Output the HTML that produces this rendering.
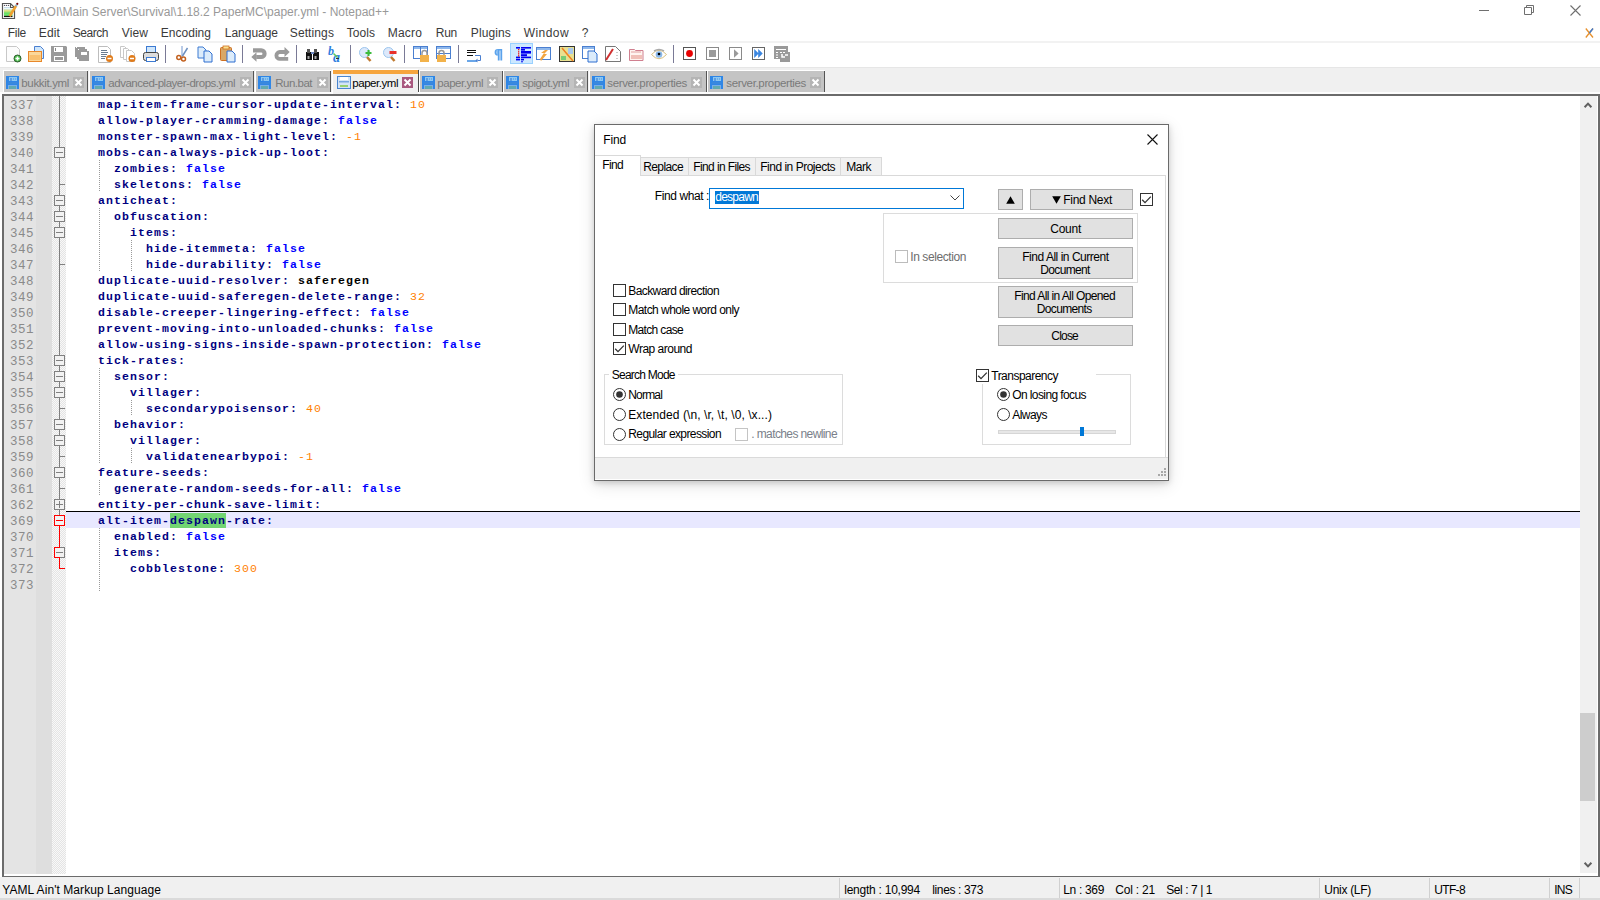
<!DOCTYPE html><html><head><meta charset="utf-8"><style>
*{margin:0;padding:0;box-sizing:border-box}
html,body{width:1600px;height:900px;overflow:hidden;background:#fff;font-family:"Liberation Sans",sans-serif;font-size:12px;color:#000}
.a{position:absolute}
.s{position:absolute;white-space:pre}
svg{position:absolute;overflow:visible}
.code{font-family:"Liberation Mono",monospace;font-size:13.33px;line-height:16px;white-space:pre}
.t{font-size:11.5px;letter-spacing:1.1px}
.ln{position:absolute;width:32px;text-align:right;color:#8a8a8a;font-size:12.5px;letter-spacing:0.5px}
.t{position:absolute;font-weight:bold;color:#000080}
.f{color:#0000ff}
.o{color:#ff8000;font-weight:normal}
.b{color:#000}
.hl{}
.g{position:absolute;width:1px;background-image:linear-gradient(#9a9a9a 50%,transparent 50%);background-size:1px 2px}
.fb{position:absolute;width:11px;height:11px;border:1px solid #808080;background:#f2f2f2}
.fl{position:absolute;background:#808080}
.btn{position:absolute;background:#e1e1e1;border:1px solid #adadad}
.cb{position:absolute;width:13px;height:13px;border:1px solid #333;background:#fff}
.rd{position:absolute;width:13px;height:13px;border:1px solid #333;border-radius:50%;background:#fff}
.tab{position:absolute;top:72px;height:20px;background:#c4c4c4}
</style></head><body>
<svg style="left:0px;top:0px" width="20" height="21" viewBox="0 0 20 21"><defs><linearGradient id="ag" x1="0" y1="0" x2="0" y2="1"><stop offset="0" stop-color="#cfe8f4"/><stop offset="0.3" stop-color="#e2e07a"/><stop offset="0.62" stop-color="#66dd66"/><stop offset="1" stop-color="#78ee78"/></linearGradient></defs><path d="M2.5 3.5H10.5L14.5 7.5V18.5H2.5Z" fill="#fff" stroke="#555" stroke-width="1.2"/><path d="M10.5 3.5V7.5H14.5" fill="none" stroke="#555" stroke-width="1.1"/><circle cx="4.5" cy="5.4" r=".7" fill="#556"/><circle cx="6.5" cy="5.4" r=".7" fill="#556"/><circle cx="8.5" cy="5.4" r=".7" fill="#556"/><rect x="4" y="7" width="6" height=".8" fill="#b8d8e8"/><rect x="4" y="8.6" width="8.5" height="7.4" fill="url(#ag)"/><rect x="4" y="15.8" width="8.5" height="1.3" fill="#111"/><path d="M9.6 16.2L16.2 5.6" stroke="#f0a030" stroke-width="2.6"/><path d="M15.8 6.2L16.8 4.6" stroke="#8ab0d0" stroke-width="2"/><circle cx="17.3" cy="3.8" r="1.1" fill="#700"/></svg>
<div class="s" style="left:23.28px;top:5.00px;font-size:12px;line-height:15px;color:#999;font-weight:normal;letter-spacing:-0.007px;">D:\AOI\Main Server\Survival\1.18.2 PaperMC\paper.yml - Notepad++</div>
<div class="a" style="left:1479px;top:10px;width:10px;height:1px;background:#6f6f6f"></div>
<svg style="left:1524px;top:5px" width="10" height="10"><path d="M0.5 2.5h7v7h-7z M2.5 2.5v-2h7v7h-2" fill="none" stroke="#6f6f6f"/></svg>
<svg style="left:1570px;top:5px" width="11" height="11"><path d="M0.5 0.5L10.5 10.5M10.5 0.5L0.5 10.5" stroke="#6f6f6f" stroke-width="1.1"/></svg>
<div class="s" style="left:7.78px;top:26.00px;font-size:12px;line-height:15px;color:#3a3a3a;font-weight:normal;letter-spacing:-0.281px;">File</div>
<div class="s" style="left:38.78px;top:26.00px;font-size:12px;line-height:15px;color:#3a3a3a;font-weight:normal;letter-spacing:0.133px;">Edit</div>
<div class="s" style="left:72.78px;top:26.00px;font-size:12px;line-height:15px;color:#3a3a3a;font-weight:normal;letter-spacing:-0.469px;">Search</div>
<div class="s" style="left:121.78px;top:26.00px;font-size:12px;line-height:15px;color:#3a3a3a;font-weight:normal;letter-spacing:0.106px;">View</div>
<div class="s" style="left:160.78px;top:26.00px;font-size:12px;line-height:15px;color:#3a3a3a;font-weight:normal;letter-spacing:0.022px;">Encoding</div>
<div class="s" style="left:224.78px;top:26.00px;font-size:12px;line-height:15px;color:#3a3a3a;font-weight:normal;letter-spacing:-0.021px;">Language</div>
<div class="s" style="left:289.78px;top:26.00px;font-size:12px;line-height:15px;color:#3a3a3a;font-weight:normal;letter-spacing:0.108px;">Settings</div>
<div class="s" style="left:346.78px;top:26.00px;font-size:12px;line-height:15px;color:#3a3a3a;font-weight:normal;letter-spacing:0.041px;">Tools</div>
<div class="s" style="left:387.78px;top:26.00px;font-size:12px;line-height:15px;color:#3a3a3a;font-weight:normal;letter-spacing:0.175px;">Macro</div>
<div class="s" style="left:435.78px;top:26.00px;font-size:12px;line-height:15px;color:#3a3a3a;font-weight:normal;letter-spacing:-0.265px;">Run</div>
<div class="s" style="left:470.78px;top:26.00px;font-size:12px;line-height:15px;color:#3a3a3a;font-weight:normal;letter-spacing:0.123px;">Plugins</div>
<div class="s" style="left:523.78px;top:26.00px;font-size:12px;line-height:15px;color:#3a3a3a;font-weight:normal;letter-spacing:0.422px;">Window</div>
<div class="s" style="left:581.78px;top:26.00px;font-size:12px;line-height:15px;color:#3a3a3a;font-weight:normal;letter-spacing:0.000px;">?</div>
<svg style="left:1585px;top:28px" width="9" height="10"><path d="M0.8 0.5L8 9.5M8 0.5L0.8 9.5" stroke="#e8902a" stroke-width="1.3"/><path d="M8 0.5L4.4 5" stroke="#3a7bd5" stroke-width="1.3"/></svg>
<div class="a" style="left:0;top:41px;width:1600px;height:2px;background:#f2f2f2"></div>
<svg style="left:6px;top:46px" width="16" height="16" viewBox="0 0 16 16"><path d="M0.5 0.5h10l3 3v12h-13z" fill="#fcfcfc" stroke="#c8c8c8"/><circle cx="11.5" cy="12.5" r="3.5" fill="#4bbf4b" stroke="#2d5a2d"/><path d="M11.5 10.5v4M9.5 12.5h4" stroke="#fff" stroke-width="1.5"/></svg>
<svg style="left:28px;top:46px" width="16" height="16" viewBox="0 0 16 16"><path d="M6.5 0.5h6l3 3v9h-9z" fill="#cfe6fb" stroke="#4a7fd0"/><rect x="0.5" y="5.5" width="13" height="10" fill="#fbd79a" stroke="#e8882a"/><rect x="1.5" y="9" width="11" height="5" fill="#f8c070"/></svg>
<svg style="left:51px;top:46px" width="16" height="16" viewBox="0 0 16 16"><path d="M0 0h15l1 1v15h-16z" fill="#9a9a9a"/><rect x="3" y="1" width="9" height="5" fill="#fff"/><rect x="4" y="2" width="1" height="3" fill="#888"/><rect x="3" y="10" width="10" height="5" fill="#fff"/><rect x="4" y="11" width="8" height="3" fill="#9a9a9a"/></svg>
<svg style="left:75px;top:46px" width="16" height="16" viewBox="0 0 16 16"><rect x="0" y="1" width="10" height="10" fill="#9a9a9a"/><rect x="2" y="3" width="10" height="10" fill="#9a9a9a"/><rect x="4" y="5" width="10" height="10" fill="#9a9a9a"/><rect x="6" y="6" width="6" height="3" fill="#fff"/><rect x="1" y="1" width="1" height="1" fill="#fff"/><rect x="3" y="3" width="1" height="1" fill="#fff"/></svg>
<svg style="left:98px;top:46px" width="16" height="16" viewBox="0 0 16 16"><path d="M0.5 0.5h9l3 3v13h-12z" fill="#fff" stroke="#bdbdbd"/><path d="M3 4.5h6M3 6.5h7M3 8.5h6M3 10.5h5M3 12.5h4" stroke="#6a7c90" stroke-width="1"/><circle cx="11.5" cy="12.5" r="3.5" fill="#e07b1a"/><path d="M9.5 12.5h4" stroke="#fff" stroke-width="1.5"/></svg>
<svg style="left:120px;top:46px" width="16" height="16" viewBox="0 0 16 16"><path d="M0.5 0.5h4l3 3v8h-7z" fill="#fff" stroke="#c8c8c8"/><path d="M3.5 2.5h4l3 3v8h-7z" fill="#fff" stroke="#c8c8c8"/><path d="M6.5 4.5h5l3 3v8h-8z" fill="#fff" stroke="#c8c8c8"/><circle cx="12" cy="12.5" r="3.5" fill="#e07b1a"/><path d="M10 12.5h4" stroke="#fff" stroke-width="1.5"/></svg>
<svg style="left:143px;top:46px" width="16" height="16" viewBox="0 0 16 16"><rect x="3.5" y="0.5" width="9" height="7" fill="#cfe6fb" stroke="#3c7ad2"/><rect x="0.5" y="6.5" width="15" height="8" rx="2" fill="#dcdcdc" stroke="#444"/><rect x="3.5" y="11.5" width="9" height="4" fill="#fff" stroke="#3c7ad2"/></svg>
<div class="a" style="left:165px;top:45px;width:1px;height:18px;background:#7a7a96"></div>
<svg style="left:176px;top:46px" width="16" height="16" viewBox="0 0 16 16"><path d="M6 0v11" stroke="#8aa8d8" stroke-width="1.2"/><path d="M11.5 2L6.5 10" stroke="#6b8fc0" stroke-width="1.5"/><circle cx="2.8" cy="11.5" r="2" fill="none" stroke="#c2601e" stroke-width="1.5"/><circle cx="7.5" cy="13" r="2" fill="none" stroke="#c2601e" stroke-width="1.5"/></svg>
<svg style="left:197px;top:46px" width="16" height="16" viewBox="0 0 16 16"><path d="M1.0 1.0h5l3 3v8h-8z" fill="#dcecfb" stroke="#3c7ad2"/><path d="M7.0 5.0h5l3 3v8h-8z" fill="#dcecfb" stroke="#2f6fd0"/></svg>
<svg style="left:220px;top:46px" width="16" height="16" viewBox="0 0 16 16"><rect x="0.5" y="1.5" width="11" height="13" rx="1" fill="#d9a866" stroke="#d07020"/><rect x="3" y="0" width="6" height="3" fill="#f8e090" stroke="#d07020" stroke-width=".8"/><path d="M7.0 5.0h5l3 3v8h-8z" fill="#dcecfb" stroke="#2f6fd0"/></svg>
<div class="a" style="left:242px;top:45px;width:1px;height:18px;background:#7a7a96"></div>
<svg style="left:251px;top:46px" width="16" height="18" viewBox="0 0 16 18"><path d="M2 4.3h8.2a3.35 3.35 0 0 1 0 6.7h-5" fill="none" stroke="#9a9a9a" stroke-width="4.2"/><path d="M0.3 11l5.2-4.8v9.6z" fill="#9a9a9a"/></svg>
<svg style="left:274px;top:46px" width="16" height="18" viewBox="0 0 16 18"><path d="M12 6h-6.2a3.4 3.4 0 0 0 0 6.8h8.4" fill="none" stroke="#9a9a9a" stroke-width="3.8"/><path d="M15.7 6l-5.2-5v10z" fill="#9a9a9a"/></svg>
<div class="a" style="left:296px;top:45px;width:1px;height:18px;background:#7a7a96"></div>
<svg style="left:306px;top:48px" width="14" height="13" viewBox="0 0 14 13"><rect x="0" y="4" width="6" height="8" fill="#111"/><rect x="7" y="4" width="6" height="8" fill="#111"/><rect x="1" y="1" width="3" height="4" fill="#555"/><rect x="8" y="1" width="3" height="4" fill="#555"/><rect x="5" y="4" width="3" height="2" fill="#6a86c0"/><rect x="1.5" y="8" width="2" height="3" fill="#aaa"/><rect x="8.5" y="8" width="2" height="3" fill="#aaa"/></svg>
<svg style="left:328px;top:46px" width="16" height="16" viewBox="0 0 16 16"><text x="0" y="9" font-family="Liberation Serif" font-style="italic" font-weight="bold" font-size="12" fill="#2f7fe0">b</text><text x="5" y="16" font-family="Liberation Serif" font-style="italic" font-weight="bold" font-size="14" fill="#2f7fe0">a</text><path d="M5.5 7.5l4 4" stroke="#5fc85f" stroke-width="1.6"/><path d="M8 12.5h3" stroke="#333" stroke-width="1"/></svg>
<div class="a" style="left:350px;top:45px;width:1px;height:18px;background:#7a7a96"></div>
<svg style="left:359px;top:47px" width="14" height="15" viewBox="0 0 14 15"><circle cx="5.5" cy="5.5" r="5" fill="#dde9fb" stroke="#9cc6ee"/><path d="M8 10l3.5 4" stroke="#c07a30" stroke-width="2.5"/><path d="M9.5 3v6M6.5 6h6" stroke="#3dbb3d" stroke-width="2"/></svg>
<svg style="left:383px;top:47px" width="14" height="15" viewBox="0 0 14 15"><circle cx="5.5" cy="5.5" r="5" fill="#dde9fb" stroke="#9cc6ee"/><path d="M8 10l3.5 4" stroke="#c07a30" stroke-width="2.5"/><rect x="6.5" y="4" width="7" height="3" fill="#e8302a"/></svg>
<div class="a" style="left:404px;top:45px;width:1px;height:18px;background:#7a7a96"></div>
<svg style="left:413px;top:46px" width="16" height="16" viewBox="0 0 16 16"><rect x="0.5" y="0.5" width="14" height="12" fill="#fff" stroke="#4a7fd0"/><path d="M1 2h13" stroke="#8fb8ec" stroke-width="2"/><path d="M7.5 1v12" stroke="#4a7fd0"/><path d="M9 10v-3a2.5 2.5 0 0 1 5 0v3" fill="none" stroke="#999" stroke-width="1.5"/><rect x="7" y="9" width="9" height="7" fill="#f2b24a"/></svg>
<svg style="left:436px;top:46px" width="16" height="16" viewBox="0 0 16 16"><rect x="0.5" y="0.5" width="14" height="12" fill="#fff" stroke="#4a7fd0"/><path d="M1 2h13" stroke="#8fb8ec" stroke-width="2"/><path d="M1 7.5h13" stroke="#4a7fd0"/><path d="M3 10v-3a2.5 2.5 0 0 1 5 0v3" fill="none" stroke="#999" stroke-width="1.5"/><rect x="1" y="9" width="9" height="7" fill="#f2b24a"/></svg>
<div class="a" style="left:458px;top:45px;width:1px;height:18px;background:#7a7a96"></div>
<svg style="left:467px;top:47px" width="16" height="16" viewBox="0 0 16 16"><path d="M0 3.5h9M0 5.5h9M0 8.5h6" stroke="#111"/><rect x="0" y="13" width="10" height="2" fill="#6aa6e8"/><path d="M8 8.5h5.5v5h-3" fill="none" stroke="#4a7fd0"/><path d="M10.5 11.5v4l-2-2z" fill="#4a7fd0"/></svg>
<svg style="left:493px;top:48px" width="10" height="13" viewBox="0 0 10 13"><path d="M5 1H9.2V12.5H7.4V2.6H6.6V12.5H4.8V7.6A3.3 3.3 0 0 1 5 1z" fill="#5aa2ec"/><path d="M4.6 1.6A2.6 3 0 0 0 4.6 7" fill="#9ccaf5"/></svg>
<div class="a" style="left:510px;top:43px;width:23px;height:21px;background:#cce8ff;border:1px solid #99d1ff"></div>
<svg style="left:515px;top:46px" width="16" height="16" viewBox="0 0 16 16"><g fill="#0000f0"><rect x="1" y="1" width="4" height="1.6"/><rect x="1" y="10.6" width="4" height="1.6"/><rect x="1" y="12.8" width="4" height="1.6"/><rect x="6" y="1" width="10" height="1.6"/><rect x="6" y="3" width="4" height="1.6"/><rect x="6" y="5" width="10" height="2.6"/><rect x="6" y="8.2" width="6" height="2"/><rect x="6" y="10.6" width="10" height="1.6"/><rect x="6" y="12.8" width="3" height="1.6"/><rect x="6.3" y="15" width="1.4" height="1.4"/></g><g fill="#ee1111"><rect x="3" y="3" width="1.3" height="1.3"/><rect x="3" y="5.2" width="1.3" height="1.3"/><rect x="3" y="7.2" width="1.3" height="1.3"/><rect x="3" y="9.2" width="1.3" height="1.3"/></g></svg>
<svg style="left:536px;top:47px" width="15" height="15" viewBox="0 0 15 15"><rect x="0.5" y="0.5" width="14" height="12" fill="#fff" stroke="#4a7fd0"/><path d="M1 2h13" stroke="#8fb8ec" stroke-width="2"/><path d="M4 12l4-6h-3l4-3h3l-4 4h3l-6 7z" fill="#f3a540"/></svg>
<svg style="left:559px;top:46px" width="16" height="16" viewBox="0 0 16 16"><rect x="0.5" y="0.5" width="15" height="15" fill="#e8e090" stroke="#333"/><rect x="9" y="2" width="5" height="6" fill="#a8c8ec"/><rect x="2" y="10" width="5" height="4" fill="#77cc77"/><path d="M3 2l5 6l6 7" stroke="#f08020" stroke-width="1.5" fill="none"/></svg>
<svg style="left:582px;top:46px" width="16" height="16" viewBox="0 0 16 16"><rect x="0.5" y="0.5" width="12" height="12" fill="#fff" stroke="#4a7fd0"/><path d="M1 2h11" stroke="#8fb8ec" stroke-width="2"/><path d="M6.0 5.0h6l3 3v8h-9z" fill="#dcecfb" stroke="#2f6fd0"/></svg>
<svg style="left:605px;top:46px" width="16" height="16" viewBox="0 0 16 16"><path d="M0.5 0.5h10l5 5v10h-15z" fill="#fff" stroke="#777"/><path d="M1 14l7-11" stroke="#d03030" stroke-width="2"/><path d="M12 6v8" stroke="#999" stroke-dasharray="1 2"/></svg>
<svg style="left:629px;top:49px" width="15" height="12" viewBox="0 0 15 12"><path d="M0.5 0.5h5l1 1h7.5v10h-13.5z" fill="#fff4f0" stroke="#d08090"/><rect x="2" y="6" width="11" height="4" fill="#f0c0b8"/><path d="M2 3h10" stroke="#e0a0a0"/></svg>
<svg style="left:651px;top:48px" width="16" height="13" viewBox="0 0 16 13"><path d="M0.5 6.5Q8 -2 15.5 6.5Q8 15 0.5 6.5z" fill="#fff" stroke="#d8c080"/><path d="M3 3Q8 0 13 3" stroke="#aaa" stroke-width="1.5" fill="none"/><circle cx="8" cy="6.5" r="3.3" fill="#8ab8e8"/><circle cx="8" cy="6" r="1.3" fill="#000"/></svg>
<div class="a" style="left:673px;top:45px;width:1px;height:18px;background:#7a7a96"></div>
<svg style="left:683px;top:47px" width="13" height="13" viewBox="0 0 13 13"><rect x="0.5" y="0.5" width="12" height="12" fill="#fff" stroke="#555"/><circle cx="6.5" cy="6.5" r="3.4" fill="#e80000"/></svg>
<svg style="left:706px;top:47px" width="13" height="13" viewBox="0 0 13 13"><rect x="0.5" y="0.5" width="12" height="12" fill="#fff" stroke="#8a8a8a"/><rect x="3" y="3" width="7" height="7" fill="#9a9a9a"/></svg>
<svg style="left:729px;top:47px" width="13" height="13" viewBox="0 0 13 13"><rect x="0.5" y="0.5" width="12" height="12" fill="#fff" stroke="#8a8a8a"/><path d="M5 2.2l4.6 4.3l-4.6 4.3z" fill="#9a9a9a"/></svg>
<svg style="left:752px;top:47px" width="13" height="13" viewBox="0 0 13 13"><rect x="0.5" y="0.5" width="12" height="12" fill="#fff" stroke="#666"/><path d="M2.2 2l4.5 4.5l-4.5 4.5zM6.2 2l4.5 4.5l-4.5 4.5z" fill="#3a86e0"/></svg>
<svg style="left:774px;top:46px" width="16" height="16" viewBox="0 0 16 16"><rect x="0" y="0" width="14" height="13" fill="#9a9a9a"/><rect x="6" y="6" width="10" height="10" fill="#9a9a9a"/><path d="M2 3.5h10M2 6.5h2M6 6.5h2M9 6.5h2M2 9h2M2 11.5h2" stroke="#fff"/><path d="M8 8v3h3M11 9h3" stroke="#fff" stroke-width="1.5" fill="none"/></svg>
<div class="a" style="left:0;top:67px;width:1600px;height:1px;background:#e6e6e6"></div>
<div class="a" style="left:0;top:68px;width:1600px;height:26px;background:#f0f0f0"></div>
<div class="a" style="left:0;top:92px;width:1600px;height:2px;background:#fdfdfd"></div>
<div class="a" style="left:3px;top:70px;width:85px;height:22px;background:#fff"></div>
<div class="tab" style="left:4px;top:71px;width:83px;height:21px"></div>
<div class="a" style="left:87px;top:71px;width:1px;height:21px;background:#555"></div>
<svg style="left:6px;top:76px" width="13" height="13" viewBox="0 0 13 13"><rect x="0" y="0" width="13" height="13" fill="#2f86e6"/><rect x="3" y="1" width="8" height="4" fill="#8cc8f2"/><rect x="4.5" y="2" width="1" height="3" fill="#2f70d0"/><rect x="7" y="2.5" width="1" height="1" fill="#5090e0"/><rect x="9" y="2.5" width="1" height="1" fill="#5090e0"/><rect x="2" y="6" width="9" height="2" fill="#3a88dc"/><rect x="2" y="9" width="9" height="4" fill="#78aee8"/><rect x="3" y="10" width="7" height="3" fill="#60aab0"/></svg>
<div class="s" style="left:21.31px;top:76.00px;font-size:11.5px;line-height:14px;color:#7a7a7a;font-weight:normal;letter-spacing:-0.344px;">bukkit.yml</div>
<svg style="left:73px;top:77px" width="11" height="11"><rect x="0" y="0" width="11" height="11" fill="#b4b4b4"/><path d="M2.5 2.5L8.5 8.5M8.5 2.5L2.5 8.5" stroke="#fff" stroke-width="2"/></svg>
<div class="a" style="left:89px;top:70px;width:165px;height:22px;background:#fff"></div>
<div class="tab" style="left:90px;top:71px;width:163px;height:21px"></div>
<div class="a" style="left:253px;top:71px;width:1px;height:21px;background:#555"></div>
<svg style="left:92px;top:76px" width="13" height="13" viewBox="0 0 13 13"><rect x="0" y="0" width="13" height="13" fill="#2f86e6"/><rect x="3" y="1" width="8" height="4" fill="#8cc8f2"/><rect x="4.5" y="2" width="1" height="3" fill="#2f70d0"/><rect x="7" y="2.5" width="1" height="1" fill="#5090e0"/><rect x="9" y="2.5" width="1" height="1" fill="#5090e0"/><rect x="2" y="6" width="9" height="2" fill="#3a88dc"/><rect x="2" y="9" width="9" height="4" fill="#78aee8"/><rect x="3" y="10" width="7" height="3" fill="#60aab0"/></svg>
<div class="s" style="left:108.31px;top:76.00px;font-size:11.5px;line-height:14px;color:#7a7a7a;font-weight:normal;letter-spacing:-0.481px;">advanced-player-drops.yml</div>
<svg style="left:240px;top:77px" width="11" height="11"><rect x="0" y="0" width="11" height="11" fill="#b4b4b4"/><path d="M2.5 2.5L8.5 8.5M8.5 2.5L2.5 8.5" stroke="#fff" stroke-width="2"/></svg>
<div class="a" style="left:255px;top:70px;width:76px;height:22px;background:#fff"></div>
<div class="tab" style="left:256px;top:71px;width:74px;height:21px"></div>
<div class="a" style="left:330px;top:71px;width:1px;height:21px;background:#555"></div>
<svg style="left:258px;top:76px" width="13" height="13" viewBox="0 0 13 13"><rect x="0" y="0" width="13" height="13" fill="#2f86e6"/><rect x="3" y="1" width="8" height="4" fill="#8cc8f2"/><rect x="4.5" y="2" width="1" height="3" fill="#2f70d0"/><rect x="7" y="2.5" width="1" height="1" fill="#5090e0"/><rect x="9" y="2.5" width="1" height="1" fill="#5090e0"/><rect x="2" y="6" width="9" height="2" fill="#3a88dc"/><rect x="2" y="9" width="9" height="4" fill="#78aee8"/><rect x="3" y="10" width="7" height="3" fill="#60aab0"/></svg>
<div class="s" style="left:275.31px;top:76.00px;font-size:11.5px;line-height:14px;color:#7a7a7a;font-weight:normal;letter-spacing:-0.513px;">Run.bat</div>
<svg style="left:317px;top:77px" width="11" height="11"><rect x="0" y="0" width="11" height="11" fill="#b4b4b4"/><path d="M2.5 2.5L8.5 8.5M8.5 2.5L2.5 8.5" stroke="#fff" stroke-width="2"/></svg>
<div class="a" style="left:332px;top:69px;width:86px;height:25px;background:#fff"></div>
<div class="a" style="left:333px;top:70px;width:85px;height:24px;background:#f0f0f0"></div>
<div class="a" style="left:333px;top:70px;width:85px;height:4px;background:#f6a53e"></div>
<div class="a" style="left:418px;top:70px;width:1px;height:22px;background:#4a4a4a"></div>
<svg style="left:337px;top:76px" width="14" height="13" viewBox="0 0 14 13"><rect x="0.5" y="0.5" width="13" height="12" fill="#d4e4f6" stroke="#4a86d0"/><rect x="3" y="1" width="8" height="3" fill="#fff"/><rect x="2" y="5" width="10" height="1.5" fill="#7aa8e0"/><rect x="3" y="9" width="8" height="2" fill="#98d070"/></svg>
<div class="s" style="left:352.31px;top:76.00px;font-size:11.5px;line-height:14px;color:#000;font-weight:normal;letter-spacing:-0.463px;">paper.yml</div>
<svg style="left:402px;top:77px" width="11" height="11"><rect x="0" y="0" width="11" height="11" fill="#a9587f"/><path d="M2.5 2.5L8.5 8.5M8.5 2.5L2.5 8.5" stroke="#fff" stroke-width="2"/></svg>
<div class="a" style="left:419px;top:70px;width:84px;height:22px;background:#fff"></div>
<div class="tab" style="left:420px;top:71px;width:82px;height:21px"></div>
<div class="a" style="left:502px;top:71px;width:1px;height:21px;background:#555"></div>
<svg style="left:422px;top:76px" width="13" height="13" viewBox="0 0 13 13"><rect x="0" y="0" width="13" height="13" fill="#2f86e6"/><rect x="3" y="1" width="8" height="4" fill="#8cc8f2"/><rect x="4.5" y="2" width="1" height="3" fill="#2f70d0"/><rect x="7" y="2.5" width="1" height="1" fill="#5090e0"/><rect x="9" y="2.5" width="1" height="1" fill="#5090e0"/><rect x="2" y="6" width="9" height="2" fill="#3a88dc"/><rect x="2" y="9" width="9" height="4" fill="#78aee8"/><rect x="3" y="10" width="7" height="3" fill="#60aab0"/></svg>
<div class="s" style="left:437.31px;top:76.00px;font-size:11.5px;line-height:14px;color:#7a7a7a;font-weight:normal;letter-spacing:-0.463px;">paper.yml</div>
<svg style="left:487px;top:77px" width="11" height="11"><rect x="0" y="0" width="11" height="11" fill="#b4b4b4"/><path d="M2.5 2.5L8.5 8.5M8.5 2.5L2.5 8.5" stroke="#fff" stroke-width="2"/></svg>
<div class="a" style="left:503px;top:70px;width:85px;height:22px;background:#fff"></div>
<div class="tab" style="left:504px;top:71px;width:83px;height:21px"></div>
<div class="a" style="left:587px;top:71px;width:1px;height:21px;background:#555"></div>
<svg style="left:506px;top:76px" width="13" height="13" viewBox="0 0 13 13"><rect x="0" y="0" width="13" height="13" fill="#2f86e6"/><rect x="3" y="1" width="8" height="4" fill="#8cc8f2"/><rect x="4.5" y="2" width="1" height="3" fill="#2f70d0"/><rect x="7" y="2.5" width="1" height="1" fill="#5090e0"/><rect x="9" y="2.5" width="1" height="1" fill="#5090e0"/><rect x="2" y="6" width="9" height="2" fill="#3a88dc"/><rect x="2" y="9" width="9" height="4" fill="#78aee8"/><rect x="3" y="10" width="7" height="3" fill="#60aab0"/></svg>
<div class="s" style="left:522.31px;top:76.00px;font-size:11.5px;line-height:14px;color:#7a7a7a;font-weight:normal;letter-spacing:-0.509px;">spigot.yml</div>
<svg style="left:574px;top:77px" width="11" height="11"><rect x="0" y="0" width="11" height="11" fill="#b4b4b4"/><path d="M2.5 2.5L8.5 8.5M8.5 2.5L2.5 8.5" stroke="#fff" stroke-width="2"/></svg>
<div class="a" style="left:589px;top:70px;width:118px;height:22px;background:#fff"></div>
<div class="tab" style="left:590px;top:71px;width:116px;height:21px"></div>
<div class="a" style="left:706px;top:71px;width:1px;height:21px;background:#555"></div>
<svg style="left:592px;top:76px" width="13" height="13" viewBox="0 0 13 13"><rect x="0" y="0" width="13" height="13" fill="#2f86e6"/><rect x="3" y="1" width="8" height="4" fill="#8cc8f2"/><rect x="4.5" y="2" width="1" height="3" fill="#2f70d0"/><rect x="7" y="2.5" width="1" height="1" fill="#5090e0"/><rect x="9" y="2.5" width="1" height="1" fill="#5090e0"/><rect x="2" y="6" width="9" height="2" fill="#3a88dc"/><rect x="2" y="9" width="9" height="4" fill="#78aee8"/><rect x="3" y="10" width="7" height="3" fill="#60aab0"/></svg>
<div class="s" style="left:607.31px;top:76.00px;font-size:11.5px;line-height:14px;color:#7a7a7a;font-weight:normal;letter-spacing:-0.351px;">server.properties</div>
<svg style="left:691px;top:77px" width="11" height="11"><rect x="0" y="0" width="11" height="11" fill="#b4b4b4"/><path d="M2.5 2.5L8.5 8.5M8.5 2.5L2.5 8.5" stroke="#fff" stroke-width="2"/></svg>
<div class="a" style="left:707px;top:70px;width:118px;height:22px;background:#fff"></div>
<div class="tab" style="left:708px;top:71px;width:116px;height:21px"></div>
<div class="a" style="left:824px;top:71px;width:1px;height:21px;background:#555"></div>
<svg style="left:710px;top:76px" width="13" height="13" viewBox="0 0 13 13"><rect x="0" y="0" width="13" height="13" fill="#2f86e6"/><rect x="3" y="1" width="8" height="4" fill="#8cc8f2"/><rect x="4.5" y="2" width="1" height="3" fill="#2f70d0"/><rect x="7" y="2.5" width="1" height="1" fill="#5090e0"/><rect x="9" y="2.5" width="1" height="1" fill="#5090e0"/><rect x="2" y="6" width="9" height="2" fill="#3a88dc"/><rect x="2" y="9" width="9" height="4" fill="#78aee8"/><rect x="3" y="10" width="7" height="3" fill="#60aab0"/></svg>
<div class="s" style="left:726.31px;top:76.00px;font-size:11.5px;line-height:14px;color:#7a7a7a;font-weight:normal;letter-spacing:-0.351px;">server.properties</div>
<svg style="left:810px;top:77px" width="11" height="11"><rect x="0" y="0" width="11" height="11" fill="#b4b4b4"/><path d="M2.5 2.5L8.5 8.5M8.5 2.5L2.5 8.5" stroke="#fff" stroke-width="2"/></svg>
<div class="a" style="left:2px;top:94px;width:1598px;height:783px;background:#6b6b6b"></div>
<div class="a" style="left:4px;top:96px;width:1594px;height:780px;background:#fff"></div>
<div class="a" style="left:4px;top:96px;width:32px;height:778px;background:#e4e4e4"></div>
<div class="a" style="left:36px;top:96px;width:16px;height:778px;background:#dedede"></div>
<div class="a" style="left:52px;top:96px;width:14px;height:778px;background-color:#f8f8f8;background-image:linear-gradient(45deg,#e4e4e4 25%,transparent 25%,transparent 75%,#e4e4e4 75%),linear-gradient(45deg,#e4e4e4 25%,transparent 25%,transparent 75%,#e4e4e4 75%);background-size:2px 2px;background-position:0 0,1px 1px"></div>
<div class="a" style="left:66px;top:512px;width:1514px;height:16px;background:#e8e8ff"></div>
<div class="a" style="left:66px;top:511px;width:1514px;height:1px;background:#000"></div>
<div class="a" style="left:170px;top:513px;width:56px;height:15px;background:#72d572"></div>
<div class="a" style="left:1580px;top:96px;width:17px;height:777px;background:#f0f0f0"></div>
<div class="a" style="left:1580px;top:713px;width:15px;height:88px;background:#cdcdcd"></div>
<svg style="left:1584px;top:102px" width="8" height="6"><path d="M0.6 5.2L4 1.6L7.4 5.2" stroke="#606060" stroke-width="2" fill="none"/></svg>
<svg style="left:1584px;top:862px" width="8" height="6"><path d="M0.6 0.8L4 4.4L7.4 0.8" stroke="#606060" stroke-width="2" fill="none"/></svg>
<div class="code a" style="left:0;top:0">
<div class="ln" style="top:98px;left:2px">337</div>
<div class="t" style="top:97px;left:66px">    map-item-frame-cursor-update-interval: <span class="o">10</span></div>
<div class="ln" style="top:114px;left:2px">338</div>
<div class="t" style="top:113px;left:66px">    allow-player-cramming-damage: <span class="f">false</span></div>
<div class="ln" style="top:130px;left:2px">339</div>
<div class="t" style="top:129px;left:66px">    monster-spawn-max-light-level: <span class="o">-1</span></div>
<div class="ln" style="top:146px;left:2px">340</div>
<div class="t" style="top:145px;left:66px">    mobs-can-always-pick-up-loot:</div>
<div class="ln" style="top:162px;left:2px">341</div>
<div class="t" style="top:161px;left:66px">      zombies: <span class="f">false</span></div>
<div class="ln" style="top:178px;left:2px">342</div>
<div class="t" style="top:177px;left:66px">      skeletons: <span class="f">false</span></div>
<div class="ln" style="top:194px;left:2px">343</div>
<div class="t" style="top:193px;left:66px">    anticheat:</div>
<div class="ln" style="top:210px;left:2px">344</div>
<div class="t" style="top:209px;left:66px">      obfuscation:</div>
<div class="ln" style="top:226px;left:2px">345</div>
<div class="t" style="top:225px;left:66px">        items:</div>
<div class="ln" style="top:242px;left:2px">346</div>
<div class="t" style="top:241px;left:66px">          hide-itemmeta: <span class="f">false</span></div>
<div class="ln" style="top:258px;left:2px">347</div>
<div class="t" style="top:257px;left:66px">          hide-durability: <span class="f">false</span></div>
<div class="ln" style="top:274px;left:2px">348</div>
<div class="t" style="top:273px;left:66px">    duplicate-uuid-resolver: <span class="b">saferegen</span></div>
<div class="ln" style="top:290px;left:2px">349</div>
<div class="t" style="top:289px;left:66px">    duplicate-uuid-saferegen-delete-range: <span class="o">32</span></div>
<div class="ln" style="top:306px;left:2px">350</div>
<div class="t" style="top:305px;left:66px">    disable-creeper-lingering-effect: <span class="f">false</span></div>
<div class="ln" style="top:322px;left:2px">351</div>
<div class="t" style="top:321px;left:66px">    prevent-moving-into-unloaded-chunks: <span class="f">false</span></div>
<div class="ln" style="top:338px;left:2px">352</div>
<div class="t" style="top:337px;left:66px">    allow-using-signs-inside-spawn-protection: <span class="f">false</span></div>
<div class="ln" style="top:354px;left:2px">353</div>
<div class="t" style="top:353px;left:66px">    tick-rates:</div>
<div class="ln" style="top:370px;left:2px">354</div>
<div class="t" style="top:369px;left:66px">      sensor:</div>
<div class="ln" style="top:386px;left:2px">355</div>
<div class="t" style="top:385px;left:66px">        villager:</div>
<div class="ln" style="top:402px;left:2px">356</div>
<div class="t" style="top:401px;left:66px">          secondarypoisensor: <span class="o">40</span></div>
<div class="ln" style="top:418px;left:2px">357</div>
<div class="t" style="top:417px;left:66px">      behavior:</div>
<div class="ln" style="top:434px;left:2px">358</div>
<div class="t" style="top:433px;left:66px">        villager:</div>
<div class="ln" style="top:450px;left:2px">359</div>
<div class="t" style="top:449px;left:66px">          validatenearbypoi: <span class="o">-1</span></div>
<div class="ln" style="top:466px;left:2px">360</div>
<div class="t" style="top:465px;left:66px">    feature-seeds:</div>
<div class="ln" style="top:482px;left:2px">361</div>
<div class="t" style="top:481px;left:66px">      generate-random-seeds-for-all: <span class="f">false</span></div>
<div class="ln" style="top:498px;left:2px">362</div>
<div class="t" style="top:497px;left:66px">    entity-per-chunk-save-limit:</div>
<div class="ln" style="top:514px;left:2px">369</div>
<div class="t" style="top:513px;left:66px">    alt-item-<span class="hl">despawn</span>-rate:</div>
<div class="ln" style="top:530px;left:2px">370</div>
<div class="t" style="top:529px;left:66px">      enabled: <span class="f">false</span></div>
<div class="ln" style="top:546px;left:2px">371</div>
<div class="t" style="top:545px;left:66px">      items:</div>
<div class="ln" style="top:562px;left:2px">372</div>
<div class="t" style="top:561px;left:66px">        cobblestone: <span class="o">300</span></div>
<div class="ln" style="top:578px;left:2px">373</div>
</div>
<div class="g" style="left:99px;top:160px;height:32px"></div>
<div class="g" style="left:99px;top:208px;height:64px"></div>
<div class="g" style="left:99px;top:368px;height:96px"></div>
<div class="g" style="left:99px;top:480px;height:16px"></div>
<div class="g" style="left:99px;top:528px;height:64px"></div>
<div class="g" style="left:131px;top:240px;height:32px"></div>
<div class="g" style="left:131px;top:400px;height:16px"></div>
<div class="g" style="left:131px;top:448px;height:16px"></div>
<div class="a" style="left:59px;top:96px;width:1px;height:419px;background:#808080"></div>
<div class="fb" style="left:54px;top:147px;border-color:#808080"></div>
<div class="a" style="left:56px;top:152px;width:7px;height:1px;background:#808080"></div>
<div class="a" style="left:59px;top:184px;width:6px;height:1px;background:#808080"></div>
<div class="fb" style="left:54px;top:195px;border-color:#808080"></div>
<div class="a" style="left:56px;top:200px;width:7px;height:1px;background:#808080"></div>
<div class="fb" style="left:54px;top:211px;border-color:#808080"></div>
<div class="a" style="left:56px;top:216px;width:7px;height:1px;background:#808080"></div>
<div class="fb" style="left:54px;top:227px;border-color:#808080"></div>
<div class="a" style="left:56px;top:232px;width:7px;height:1px;background:#808080"></div>
<div class="a" style="left:59px;top:264px;width:6px;height:1px;background:#808080"></div>
<div class="fb" style="left:54px;top:355px;border-color:#808080"></div>
<div class="a" style="left:56px;top:360px;width:7px;height:1px;background:#808080"></div>
<div class="fb" style="left:54px;top:371px;border-color:#808080"></div>
<div class="a" style="left:56px;top:376px;width:7px;height:1px;background:#808080"></div>
<div class="fb" style="left:54px;top:387px;border-color:#808080"></div>
<div class="a" style="left:56px;top:392px;width:7px;height:1px;background:#808080"></div>
<div class="a" style="left:59px;top:408px;width:6px;height:1px;background:#808080"></div>
<div class="fb" style="left:54px;top:419px;border-color:#808080"></div>
<div class="a" style="left:56px;top:424px;width:7px;height:1px;background:#808080"></div>
<div class="fb" style="left:54px;top:435px;border-color:#808080"></div>
<div class="a" style="left:56px;top:440px;width:7px;height:1px;background:#808080"></div>
<div class="a" style="left:59px;top:456px;width:6px;height:1px;background:#808080"></div>
<div class="fb" style="left:54px;top:467px;border-color:#808080"></div>
<div class="a" style="left:56px;top:472px;width:7px;height:1px;background:#808080"></div>
<div class="a" style="left:59px;top:488px;width:6px;height:1px;background:#808080"></div>
<div class="fb" style="left:54px;top:499px;border-color:#808080"></div>
<div class="a" style="left:56px;top:504px;width:7px;height:1px;background:#808080"></div>
<div class="a" style="left:59px;top:501px;width:1px;height:7px;background:#808080"></div>
<div class="a" style="left:59px;top:526px;width:1px;height:43px;background:#ff0000"></div>
<div class="fb" style="left:54px;top:515px;border-color:#ff0000"></div>
<div class="a" style="left:56px;top:520px;width:7px;height:1px;background:#ff0000"></div>
<div class="fb" style="left:54px;top:547px;border-color:#808080"></div>
<div class="a" style="left:56px;top:552px;width:7px;height:1px;background:#808080"></div>
<div class="a" style="left:54px;top:547px;width:6px;height:1px;background:#f00"></div>
<div class="a" style="left:54px;top:547px;width:1px;height:11px;background:#f00"></div>
<div class="a" style="left:54px;top:557px;width:6px;height:1px;background:#f00"></div>
<div class="a" style="left:59px;top:568px;width:6px;height:1px;background:#ff0000"></div>
<div class="a" style="left:594px;top:124px;width:575px;height:357px;background:#fff;border:1px solid #6a6a6a;box-shadow:0 2px 6px rgba(0,0,0,0.16),0 4px 16px rgba(0,0,0,0.12)"></div>
<div class="s" style="left:603.28px;top:133.00px;font-size:12px;line-height:15px;color:#000;font-weight:normal;letter-spacing:-0.156px;">Find</div>
<svg style="left:1147px;top:134px" width="11" height="11"><path d="M0.5 0.5L10.5 10.5M10.5 0.5L0.5 10.5" stroke="#111" stroke-width="1.1"/></svg>
<div class="a" style="left:595px;top:457px;width:573px;height:1px;background:#dadada"></div>
<div class="a" style="left:595px;top:458px;width:573px;height:21px;background:#f0f0f0"></div>
<div class="a" style="left:1158px;top:474px;width:2px;height:2px;background:#a8a8a8"></div>
<div class="a" style="left:1161px;top:474px;width:2px;height:2px;background:#a8a8a8"></div>
<div class="a" style="left:1164px;top:474px;width:2px;height:2px;background:#a8a8a8"></div>
<div class="a" style="left:1161px;top:471px;width:2px;height:2px;background:#a8a8a8"></div>
<div class="a" style="left:1164px;top:471px;width:2px;height:2px;background:#a8a8a8"></div>
<div class="a" style="left:1164px;top:468px;width:2px;height:2px;background:#a8a8a8"></div>
<div class="a" style="left:640px;top:175px;width:526px;height:1px;background:#d9d9d9"></div>
<div class="a" style="left:1165px;top:175px;width:1px;height:282px;background:#d9d9d9"></div>
<div class="a" style="left:640px;top:157px;width:49px;height:19px;background:#f0f0f0;border:1px solid #d9d9d9"></div>
<div class="a" style="left:688px;top:157px;width:68px;height:19px;background:#f0f0f0;border:1px solid #d9d9d9"></div>
<div class="a" style="left:755px;top:157px;width:86px;height:19px;background:#f0f0f0;border:1px solid #d9d9d9"></div>
<div class="a" style="left:840px;top:157px;width:42px;height:19px;background:#f0f0f0;border:1px solid #d9d9d9"></div>
<div class="a" style="left:595px;top:155px;width:46px;height:21px;background:#fff;border-top:1px solid #d9d9d9;border-right:1px solid #d9d9d9"></div>
<div class="s" style="left:602.28px;top:158.00px;font-size:12px;line-height:15px;color:#000;font-weight:normal;letter-spacing:-0.656px;">Find</div>
<div class="s" style="left:643.28px;top:160.00px;font-size:12px;line-height:15px;color:#000;font-weight:normal;letter-spacing:-0.616px;">Replace</div>
<div class="s" style="left:693.28px;top:160.00px;font-size:12px;line-height:15px;color:#000;font-weight:normal;letter-spacing:-0.613px;">Find in Files</div>
<div class="s" style="left:760.28px;top:160.00px;font-size:12px;line-height:15px;color:#000;font-weight:normal;letter-spacing:-0.499px;">Find in Projects</div>
<div class="s" style="left:846.28px;top:160.00px;font-size:12px;line-height:15px;color:#000;font-weight:normal;letter-spacing:-0.488px;">Mark</div>
<div class="s" style="left:654.78px;top:189.00px;font-size:12px;line-height:15px;color:#000;font-weight:normal;letter-spacing:-0.408px;">Find what :</div>
<div class="a" style="left:709px;top:188px;width:255px;height:21px;background:#fff;border:1px solid #0078d7"></div>
<div class="a" style="left:715px;top:191px;width:44px;height:13px;background:#0078d7"></div>
<div class="s" style="left:715.28px;top:190.00px;font-size:12px;line-height:15px;color:#fff;font-weight:normal;letter-spacing:-0.761px;">despawn</div>
<svg style="left:950px;top:195px" width="10" height="6"><path d="M0.5 0.5L5 5L9.5 0.5" stroke="#444" stroke-width="1" fill="none"/></svg>
<div class="a" style="left:998px;top:189px;width:25px;height:21px;background:#e1e1e1;border:1px solid #adadad"></div>
<svg style="left:1006px;top:196px" width="9" height="8"><path d="M4.5 0.3L8.8 7.8H0.2z" fill="#000"/></svg>
<div class="a" style="left:1030px;top:189px;width:103px;height:21px;background:#e1e1e1;border:1px solid #adadad"></div>
<svg style="left:1052px;top:196px" width="9" height="8"><path d="M0.2 0.2H8.8L4.5 7.7z" fill="#000"/></svg>
<div class="s" style="left:1063.28px;top:193.00px;font-size:12px;line-height:15px;color:#000;font-weight:normal;letter-spacing:-0.293px;">Find Next</div>
<div class="a" style="left:1140px;top:193px;width:13px;height:13px;background:#fff;border:1px solid #333"></div>
<svg style="left:1140px;top:193px" width="13" height="13"><path d="M2.2 6.8L5 9.6L10.8 3.6" stroke="#333" stroke-width="1.3" fill="none"/></svg>
<div class="a" style="left:883px;top:213px;width:255px;height:70px;border:1px solid #dcdcdc"></div>
<div class="a" style="left:895px;top:250px;width:13px;height:13px;background:#fff;border:1px solid #bcbcbc"></div>
<div class="s" style="left:910.28px;top:250.00px;font-size:12px;line-height:15px;color:#6d6d6d;font-weight:normal;letter-spacing:-0.415px;">In selection</div>
<div class="a" style="left:998px;top:218px;width:135px;height:21px;background:#e1e1e1;border:1px solid #adadad"></div>
<div class="s" style="left:1050.28px;top:222.00px;font-size:12px;line-height:15px;color:#000;font-weight:normal;letter-spacing:-0.262px;">Count</div>
<div class="a" style="left:998px;top:247px;width:135px;height:32px;background:#e1e1e1;border:1px solid #adadad"></div>
<div class="s" style="left:1022.28px;top:250.00px;font-size:12px;line-height:15px;color:#000;font-weight:normal;letter-spacing:-0.477px;">Find All in Current</div>
<div class="s" style="left:1040.28px;top:263.00px;font-size:12px;line-height:15px;color:#000;font-weight:normal;letter-spacing:-0.660px;">Document</div>
<div class="a" style="left:998px;top:286px;width:135px;height:32px;background:#e1e1e1;border:1px solid #adadad"></div>
<div class="s" style="left:1014.28px;top:289.00px;font-size:12px;line-height:15px;color:#000;font-weight:normal;letter-spacing:-0.607px;">Find All in All Opened</div>
<div class="s" style="left:1036.78px;top:302.00px;font-size:12px;line-height:15px;color:#000;font-weight:normal;letter-spacing:-0.654px;">Documents</div>
<div class="a" style="left:998px;top:325px;width:135px;height:21px;background:#e1e1e1;border:1px solid #adadad"></div>
<div class="s" style="left:1051.28px;top:329.00px;font-size:12px;line-height:15px;color:#000;font-weight:normal;letter-spacing:-0.794px;">Close</div>
<div class="a" style="left:613px;top:284px;width:13px;height:13px;background:#fff;border:1px solid #333"></div>
<div class="s" style="left:628.28px;top:284.00px;font-size:12px;line-height:15px;color:#000;font-weight:normal;letter-spacing:-0.593px;">Backward direction</div>
<div class="a" style="left:613px;top:303px;width:13px;height:13px;background:#fff;border:1px solid #333"></div>
<div class="s" style="left:628.28px;top:303.00px;font-size:12px;line-height:15px;color:#000;font-weight:normal;letter-spacing:-0.540px;">Match whole word only</div>
<div class="a" style="left:613px;top:323px;width:13px;height:13px;background:#fff;border:1px solid #333"></div>
<div class="s" style="left:628.28px;top:323.00px;font-size:12px;line-height:15px;color:#000;font-weight:normal;letter-spacing:-0.664px;">Match case</div>
<div class="a" style="left:613px;top:342px;width:13px;height:13px;background:#fff;border:1px solid #333"></div>
<svg style="left:613px;top:342px" width="13" height="13"><path d="M2.2 6.8L5 9.6L10.8 3.6" stroke="#333" stroke-width="1.3" fill="none"/></svg>
<div class="s" style="left:628.28px;top:342.00px;font-size:12px;line-height:15px;color:#000;font-weight:normal;letter-spacing:-0.494px;">Wrap around</div>
<div class="a" style="left:604px;top:374px;width:239px;height:71px;border:1px solid #dcdcdc"></div>
<div class="a" style="left:609px;top:370px;width:69px;height:8px;background:#fff"></div>
<div class="s" style="left:611.78px;top:368.00px;font-size:12px;line-height:15px;color:#000;font-weight:normal;letter-spacing:-0.764px;">Search Mode</div>
<svg style="left:613px;top:388px" width="13" height="13"><circle cx="6.5" cy="6.5" r="6" fill="#fff" stroke="#333" stroke-width="1"/><circle cx="6.5" cy="6.5" r="3.3" fill="#333"/></svg>
<div class="s" style="left:628.28px;top:388.00px;font-size:12px;line-height:15px;color:#000;font-weight:normal;letter-spacing:-0.825px;">Normal</div>
<svg style="left:613px;top:408px" width="13" height="13"><circle cx="6.5" cy="6.5" r="6" fill="#fff" stroke="#333" stroke-width="1"/></svg>
<div class="s" style="left:628.28px;top:408.00px;font-size:12px;line-height:15px;color:#000;font-weight:normal;letter-spacing:0.072px;">Extended (\n, \r, \t, \0, \x...)</div>
<svg style="left:613px;top:428px" width="13" height="13"><circle cx="6.5" cy="6.5" r="6" fill="#fff" stroke="#333" stroke-width="1"/></svg>
<div class="s" style="left:628.28px;top:427.00px;font-size:12px;line-height:15px;color:#000;font-weight:normal;letter-spacing:-0.593px;">Regular expression</div>
<div class="a" style="left:735px;top:428px;width:13px;height:13px;background:#fff;border:1px solid #c4c4c4"></div>
<div class="s" style="left:751.28px;top:427.00px;font-size:12px;line-height:15px;color:#7a7f8a;font-weight:normal;letter-spacing:-0.607px;">. matches newline</div>
<div class="a" style="left:982px;top:374px;width:149px;height:71px;border:1px solid #dcdcdc"></div>
<div class="a" style="left:975px;top:366px;width:121px;height:18px;background:#fff"></div>
<div class="a" style="left:976px;top:369px;width:13px;height:13px;background:#fff;border:1px solid #333"></div>
<svg style="left:976px;top:369px" width="13" height="13"><path d="M2.2 6.8L5 9.6L10.8 3.6" stroke="#333" stroke-width="1.3" fill="none"/></svg>
<div class="s" style="left:991.28px;top:369.00px;font-size:12px;line-height:15px;color:#000;font-weight:normal;letter-spacing:-0.517px;">Transparency</div>
<svg style="left:997px;top:388px" width="13" height="13"><circle cx="6.5" cy="6.5" r="6" fill="#fff" stroke="#333" stroke-width="1"/><circle cx="6.5" cy="6.5" r="3.3" fill="#333"/></svg>
<div class="s" style="left:1012.28px;top:388.00px;font-size:12px;line-height:15px;color:#000;font-weight:normal;letter-spacing:-0.600px;">On losing focus</div>
<svg style="left:997px;top:408px" width="13" height="13"><circle cx="6.5" cy="6.5" r="6" fill="#fff" stroke="#333" stroke-width="1"/></svg>
<div class="s" style="left:1012.28px;top:408.00px;font-size:12px;line-height:15px;color:#000;font-weight:normal;letter-spacing:-0.549px;">Always</div>
<div class="a" style="left:998px;top:430px;width:118px;height:4px;background:#e7e7e7;border:1px solid #d6d6d6"></div>
<div class="a" style="left:1080px;top:427px;width:4px;height:9px;background:#0078d7"></div>
<div class="a" style="left:0px;top:877px;width:1600px;height:23px;background:#f0f0f0"></div>
<div class="a" style="left:0px;top:898px;width:1600px;height:2px;background:#dadada"></div>
<div class="a" style="left:839px;top:878px;width:1px;height:20px;background:#d0d0d0"></div>
<div class="a" style="left:1059px;top:878px;width:1px;height:20px;background:#d0d0d0"></div>
<div class="a" style="left:1319px;top:878px;width:1px;height:20px;background:#d0d0d0"></div>
<div class="a" style="left:1429px;top:878px;width:1px;height:20px;background:#d0d0d0"></div>
<div class="a" style="left:1549px;top:878px;width:1px;height:20px;background:#d0d0d0"></div>
<div class="a" style="left:1579px;top:878px;width:1px;height:20px;background:#d0d0d0"></div>
<div class="s" style="left:2.28px;top:883.00px;font-size:12px;line-height:15px;color:#000;font-weight:normal;letter-spacing:0.064px;">YAML Ain&#x27;t Markup Language</div>
<div class="s" style="left:844.28px;top:883.00px;font-size:12px;line-height:15px;color:#000;font-weight:normal;letter-spacing:-0.246px;">length : 10,994</div>
<div class="s" style="left:932.28px;top:883.00px;font-size:12px;line-height:15px;color:#000;font-weight:normal;letter-spacing:-0.362px;">lines : 373</div>
<div class="s" style="left:1063.28px;top:883.00px;font-size:12px;line-height:15px;color:#000;font-weight:normal;letter-spacing:-0.332px;">Ln : 369</div>
<div class="s" style="left:1115.28px;top:883.00px;font-size:12px;line-height:15px;color:#000;font-weight:normal;letter-spacing:-0.205px;">Col : 21</div>
<div class="s" style="left:1166.28px;top:883.00px;font-size:12px;line-height:15px;color:#000;font-weight:normal;letter-spacing:-0.433px;">Sel : 7 | 1</div>
<div class="s" style="left:1324.28px;top:883.00px;font-size:12px;line-height:15px;color:#000;font-weight:normal;letter-spacing:-0.292px;">Unix (LF)</div>
<div class="s" style="left:1434.28px;top:883.00px;font-size:12px;line-height:15px;color:#000;font-weight:normal;letter-spacing:-0.656px;">UTF-8</div>
<div class="s" style="left:1554.28px;top:883.00px;font-size:12px;line-height:15px;color:#000;font-weight:normal;letter-spacing:-0.765px;">INS</div>
</body></html>
